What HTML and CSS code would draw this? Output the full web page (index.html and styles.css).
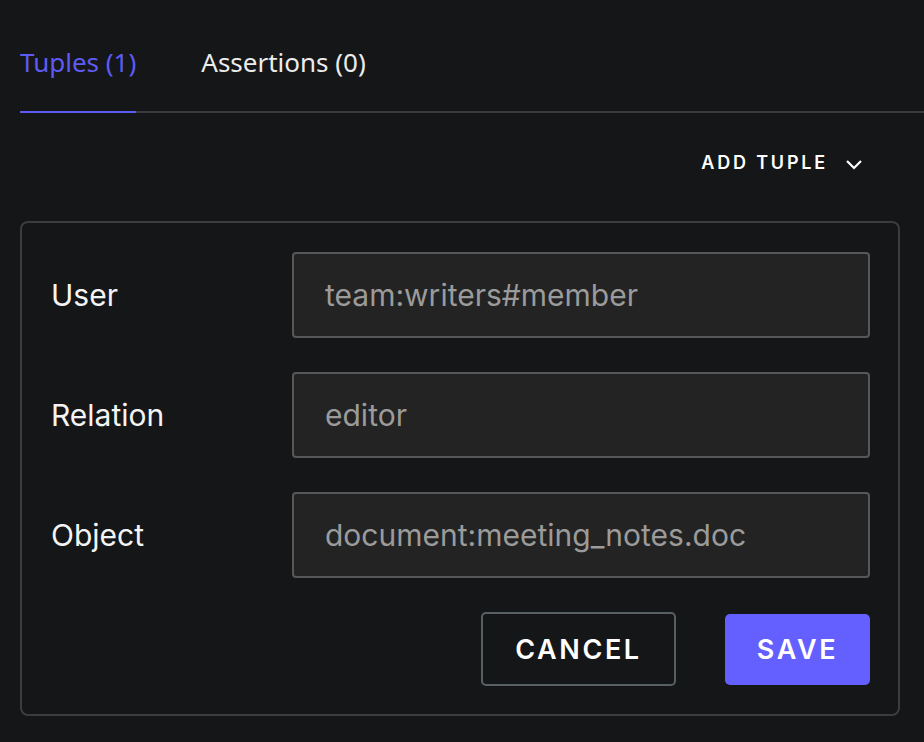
FILE: index.html
```html
<!DOCTYPE html>
<html>
<head>
<meta charset="utf-8">
<link rel="stylesheet" href="styles.css">
</head>
<body>
<div class="page">
  <div class="tabs">
    <div class="tab active">Tuples (1)</div>
    <div class="tab">Assertions (0)</div>
  </div>
  <div class="toolbar">
    <button class="add-btn">ADD TUPLE
      <svg class="chev" width="18" height="12" viewBox="0 0 18 12"><path d="M2 3 L9 10 L16 3" fill="none" stroke="#fff" stroke-width="2.2"/></svg>
    </button>
  </div>
  <div class="card">
    <div class="row">
      <label class="label">User</label>
      <div class="input">team:writers#member</div>
    </div>
    <div class="row">
      <label class="label">Relation</label>
      <div class="input">editor</div>
    </div>
    <div class="row">
      <label class="label">Object</label>
      <div class="input">document:meeting_notes.doc</div>
    </div>
    <div class="actions">
      <button class="btn cancel">CANCEL</button>
      <button class="btn save">SAVE</button>
    </div>
  </div>
</div>
</body>
</html>
```

FILE: styles.css
```css
html, body {
  margin: 0;
  padding: 0;
  background: #151618;
}
.page {
  padding: 0 24px 0 20px;
  font-family: Inter, "Noto Sans", sans-serif;
}
.tabs {
  display: flex;
  gap: 65px;
  border-bottom: 2px solid #3a3a3c;
  margin-right: -24px;
  height: 111px;
  align-items: flex-start;
}
.tab {
  font-family: "Noto Sans", "Open Sans", sans-serif;
  font-size: 26px;
  color: #ececec;
  padding-top: 44px;
  height: 67px;
  line-height: 36px;
}
.tab.active {
  color: #5e5bf4;
  border-bottom: 2px solid #5e5bf4;
  margin-bottom: -2px;
}
.toolbar {
  display: flex;
  justify-content: flex-end;
  padding: 32px 37px 0 0;
  height: 74px;
  box-sizing: border-box;
}
.add-btn {
  background: none;
  border: none;
  color: #fff;
  font-family: Inter, sans-serif;
  font-weight: 600;
  font-size: 18px;
  letter-spacing: 2.8px;
  display: flex;
  align-items: center;
  gap: 17px;
  padding: 0;
  height: 34px;
}
.chev { margin-top: 3px; }
.card {
  margin-top: 34px;
  border: 2px solid #3c3c3e;
  border-radius: 8px;
  padding: 29px 28px 28px 29px;
  display: flex;
  flex-direction: column;
  gap: 34px;
  width: 880px;
  box-sizing: border-box;
}
.row {
  display: flex;
  align-items: center;
}
.label {
  width: 241px;
  flex: none;
  font-size: 30px;
  color: #f4f4f4;
}
.input {
  flex: 1;
  height: 86px;
  box-sizing: border-box;
  border: 2px solid #57575a;
  border-radius: 4px;
  background: #232323;
  color: #9b9b9b;
  font-size: 30px;
  display: flex;
  align-items: center;
  padding-left: 31px;
}
.actions {
  display: flex;
  justify-content: flex-end;
  align-items: center;
  gap: 49px;
}
.btn {
  font-family: Inter, sans-serif;
  font-weight: 600;
  font-size: 27px;
  letter-spacing: 2.6px;
  color: #fff;
  border-radius: 5px;
  box-sizing: border-box;
}
.cancel {
  width: 195px;
  height: 74px;
  background: transparent;
  border: 2px solid #586064;
}
.save {
  width: 145px;
  height: 71px;
  background: #6360ff;
  border: none;
}
```
